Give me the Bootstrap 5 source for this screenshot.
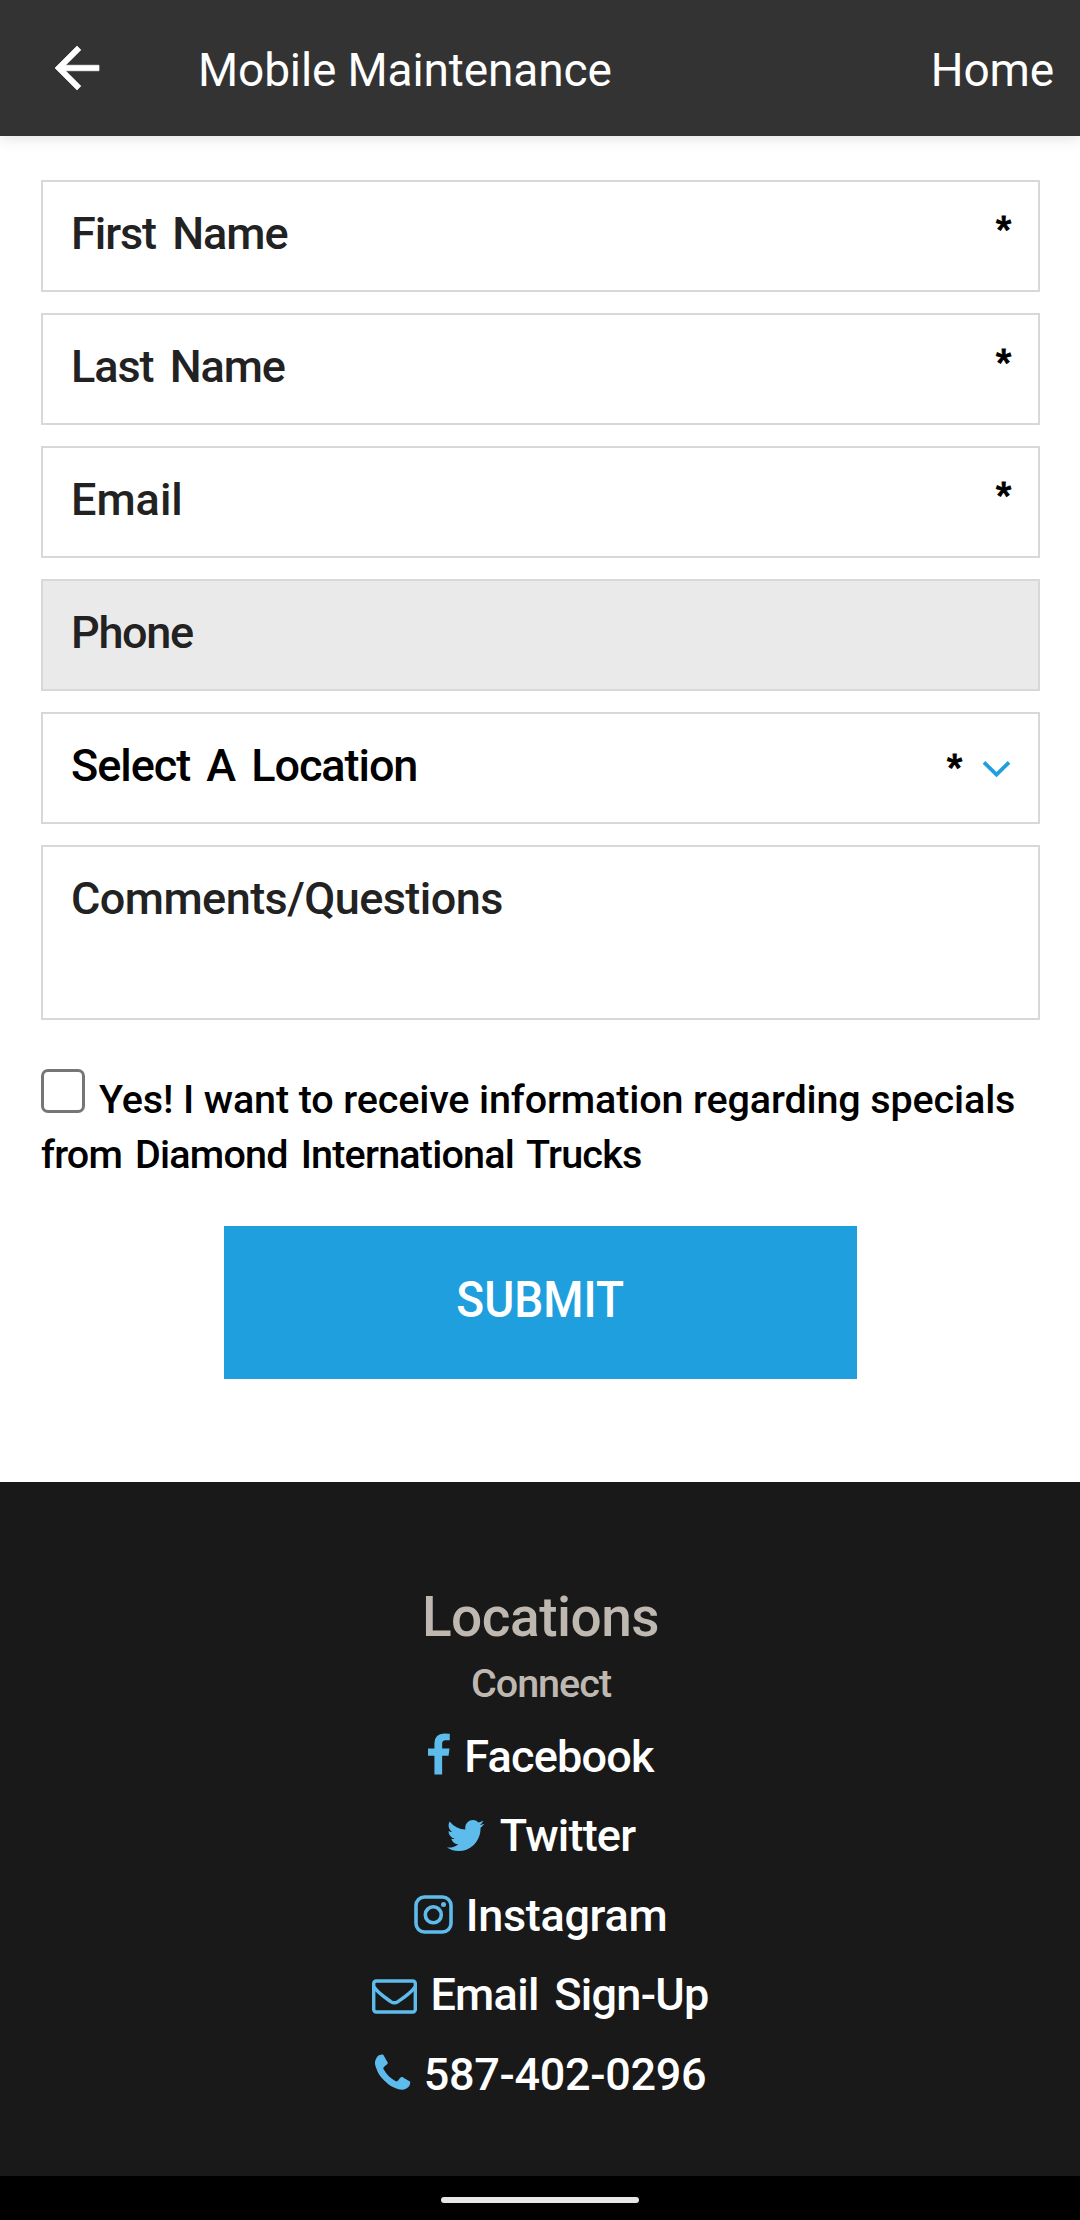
<!DOCTYPE html>
<html lang="en">
<head>
<meta charset="utf-8">
<meta name="viewport" content="width=device-width, initial-scale=1">
<title>Mobile Maintenance</title>
<link href="https://cdn.jsdelivr.net/npm/bootstrap@5.3.0/dist/css/bootstrap.min.css" rel="stylesheet">
<style>
  body { font-family: Roboto, "Liberation Sans", sans-serif; color: #000; background: #fff; }
  .app-bar { height: 136px; padding: 0 26px 0 44px; background: #333; color: #fff; font-size: 46px; box-shadow: 0 2px 14px rgba(0,0,0,.12); }
  .app-bar .bar-text { padding-top: 3px; line-height: 60px; letter-spacing: -.12px; }
  .app-bar .bar-title { margin-left: 88px; }
  .lead-form { height: 1346px; padding: 44px 40px 0 41px; }
  .field-stack { gap: 21px; }
  .field-box { height: 112px; padding: 25px 27px 0 28px; border: 2px solid #d8d8d8; color: #222; font-size: 45px; font-weight: 500; line-height: 54px; letter-spacing: -1.05px; word-spacing: 6px; }
  .field-box.off { background: #eaeaea; }
  .field-box.tall { height: 175px; letter-spacing: -.55px; }
  .field-box.pick { color: #000; }
  .req { font-size: 33px; font-weight: 900; line-height: 44px; letter-spacing: 0; color: #000; -webkit-text-stroke: .8px #000; }
  .pick .req { padding-top: 6px; margin-right: 20px; }
  .pick svg { margin-top: 21px; }
  .consent { margin-top: 49px; font-size: 39.5px; font-weight: 500; line-height: 55px; letter-spacing: -.13px; }
  .consent .second { letter-spacing: -.8px; word-spacing: 4px; }
  .consent .box { width: 44px; height: 44px; margin: 0 14px 0 0; border: 3px solid #767676; border-radius: 7px; vertical-align: baseline; float: none; }
  .btn-send { width: 633px; height: 153px; margin-top: 44px; padding: 0 0 5px; background: #209fdf; color: #fff; font-size: 50px; font-weight: 500; border: 0; }
  .btn-send span { display: inline-block; transform: scaleX(.92); }
  .site-foot { height: 694px; padding-top: 105px; background: #191919; color: #fff; }
  .foot-muted { color: #bfb8b1; font-weight: 500; }
  .foot-head { font-size: 55px; line-height: 60px; letter-spacing: -.5px; padding-left: 1px; }
  .foot-sub { font-size: 39.5px; line-height: 48px; letter-spacing: -1px; margin: 13px 0 8px; padding-left: 2px; }
  .foot-link { height: 79.6px; padding-left: 1px; font-size: 45px; font-weight: 500; gap: 13px; letter-spacing: -.3px; white-space: nowrap; }
  .foot-link span { padding-top: 1px; }
  .foot-link svg { color: #5dbcec; flex: none; }
  .foot-link .signup { letter-spacing: -.7px; word-spacing: 5px; }
  .tight { letter-spacing: -.8px; }
  .field-box .tight { letter-spacing: -1.3px; }
  .field-box .loose { letter-spacing: 0; }
  .sys-bar { height: 44px; background: #000; padding-top: 21px; }
  .sys-bar div { width: 198px; height: 6px; background: #e9e6ea; }
</style>
<script src="https://cdn.jsdelivr.net/npm/bootstrap@5.3.0/dist/js/bootstrap.bundle.min.js"></script>
</head>
<body>
<header class="app-bar d-flex align-items-center position-relative">
  <svg width="66" height="66" viewBox="0 0 24 24" fill="currentColor" stroke="currentColor" stroke-width=".25"><path d="M20 11H7.83l5.590-5.590L12 4l-8 8 8 8 1.410-1.410L7.830 13H20v-2z"/></svg>
  <span class="bar-text bar-title">Mobile Maintenance</span>
  <span class="bar-text ms-auto">Home</span>
</header>

<main class="lead-form">
  <div class="field-stack d-flex flex-column">
    <div class="field-box d-flex justify-content-between align-items-start"><span>First Name</span><span class="req">*</span></div>
    <div class="field-box d-flex justify-content-between align-items-start"><span>Last Name</span><span class="req">*</span></div>
    <div class="field-box d-flex justify-content-between align-items-start"><span class="loose">Email</span><span class="req">*</span></div>
    <div class="field-box off"><span class="tight">Phone</span></div>
    <div class="field-box pick d-flex align-items-start">
      <span class="me-auto">Select A Location</span><span class="req">*</span>
      <svg width="29" height="18" viewBox="0 0 29 18" fill="none" stroke="#209fdf" stroke-width="3.8"><path d="M2 2.4 14.5 14.5 27 2.4"/></svg>
    </div>
    <div class="field-box tall">Comments/Questions</div>
  </div>
  <div class="consent">
    <input class="form-check-input box" type="checkbox" aria-label="Receive specials">Yes! I want to receive information regarding specials<br>
    <span class="second">from Diamond International Trucks</span>
  </div>
  <div class="text-center">
    <button class="btn btn-send rounded-0" type="button"><span>SUBMIT</span></button>
  </div>
</main>

<footer class="site-foot text-center">
  <div class="foot-muted foot-head">Locations</div>
  <div class="foot-muted foot-sub">Connect</div>
  <div class="foot-link d-flex justify-content-center align-items-center">
    <svg width="24" height="46" viewBox="0 0 24 46" fill="currentColor"><g transform="translate(1 .5) scale(.0252 .0247) translate(-479 0)"><path d="M1343 12v264h-157q-86 0-116 36t-30 108v189h293l-39 296h-254v759h-306v-759h-255v-296h255v-218q0-186 104-288.5t277-102.5q147 0 228 12z"/></g></svg>
    <span class="tight">Facebook</span>
  </div>
  <div class="foot-link d-flex justify-content-center align-items-center">
    <svg width="41" height="31" viewBox="0 0 41 31" fill="currentColor"><g transform="translate(1 0) scale(.0237 .0242) translate(-108 -256)"><path d="M1684 408q-67 98-162 167 1 14 1 42 0 130-38 259.5t-115.5 248.5-184.5 210.5-258 146-323 54.5q-271 0-496-145 35 4 78 4 225 0 401-138-105-2-188-64.5t-114-159.5q33 5 61 5 43 0 85-11-112-23-185.5-111.5t-73.5-205.5v-4q68 38 146 41-66-44-105-115t-39-154q0-88 44-163 121 149 294.5 238.5t371.5 99.5q-8-38-8-74 0-134 94.5-228.5t228.5-94.5q140 0 236 102 109-21 205-78-37 115-142 178 93-10 186-50z"/></g></svg>
    <span class="tight">Twitter</span>
  </div>
  <div class="foot-link d-flex justify-content-center align-items-center">
    <svg width="39" height="39" viewBox="0 0 39 39" fill="none" stroke="currentColor" stroke-width="3.6"><rect x="2" y="2" width="35" height="35" rx="8.5"/><circle cx="19.3" cy="19.8" r="8"/><circle cx="29.5" cy="9.500" r="2.5" fill="currentColor" stroke="none"/></svg>
    <span>Instagram</span>
  </div>
  <div class="foot-link d-flex justify-content-center align-items-center">
    <svg width="45" height="38" viewBox="0 0 45 38" fill="none" stroke="currentColor" stroke-width="3.4"><rect x="1.7" y="5" width="41.6" height="31" rx="2.5"/><path d="M2 11C6 17 13 21.500 18.800 25.600q3.600 2.400 7.200 0C32 21.500 39 17 43 11"/></svg>
    <span class="signup">Email Sign-Up</span>
  </div>
  <div class="foot-link d-flex justify-content-center align-items-center">
    <svg width="36" height="40" viewBox="0 0 36 40" fill="currentColor"><g transform="translate(0 .5) scale(.025) translate(-192 -128)"><path d="M1600 1240q0 27-10 70.500t-21 68.500q-21 50-122 106-94 51-186 51-27 0-53-3.500t-57.500-12.500-47-14.500-55.500-20.500-49-18q-98-35-175-83-127-79-264-216t-216-264q-48-77-83-175-3-9-18-49t-20.500-55.500-14.500-47-12.500-57.500-3.500-53q0-92 51-186 56-101 106-122 25-11 68.500-21t70.500-10q14 0 21 3 18 6 53 76 11 19 30 54t35 63.500 31 53.500q3 4 17.500 25t21.500 35.500 7 28.500q0 20-28.500 50t-62 55-62 53-28.500 46q0 9 5 22.500t8.500 20.500 14 24 11.500 19q76 137 174 235t235 174q2 1 19 11.500t24 14 20.500 8.500 22.500 5q18 0 46-28.500t53-62 55-62 50-28.500q14 0 28.500 7t35.500 21.500 25 17.500q25 15 53.500 31t63.500 35 54 30q70 35 76 53 3 7 3 21z"/></g></svg>
    <span>587-402-0296</span>
  </div>
</footer>
<div class="sys-bar d-flex justify-content-center"><div class="rounded-pill"></div></div>
</body>
</html>
